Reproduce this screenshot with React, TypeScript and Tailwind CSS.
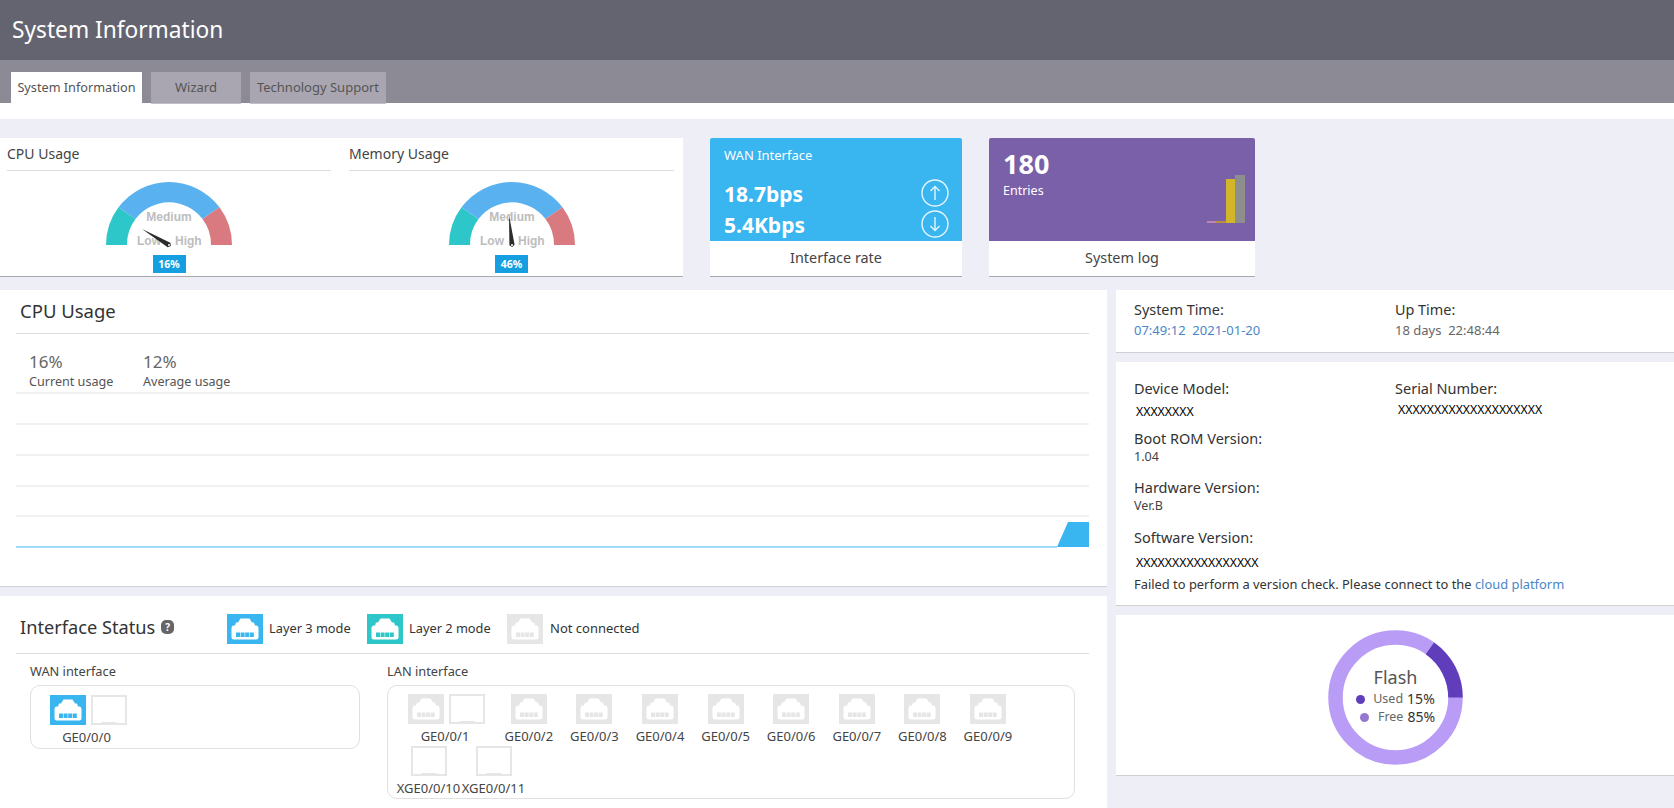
const LAN_PORTS = ["GE0/0/2", "GE0/0/3", "GE0/0/4", "GE0/0/5", "GE0/0/6", "GE0/0/7", "GE0/0/8", "GE0/0/9"];

const PortIcon = ({ color }: { color: string }) => (
  <svg width="36" height="30" viewBox="0 0 36 30" className="shrink-0 block">
    <rect width="36" height="30" fill={color} />
    <path
      d="M13.5 4.5h9l2.5 4h2l1 3h1.5q2 0 2 2.5v9q0 2.5-2.5 2.5h-22q-2.5 0-2.5-2.5v-9q0-2.5 2-2.5h1.5l1-3h2z"
      fill="#fff"
    />
    {[9, 13.6, 18.2, 22.8].map((x) => (
      <rect key={x} x={x} y="18.5" width="4" height="4.5" fill={color} />
    ))}
  </svg>
);

const SfpIcon = () => (
  <svg width="36" height="30" viewBox="0 0 36 30" className="shrink-0 block">
    <path d="M1 1h34v28H1z" fill="#fff" stroke="#e6e6e6" strokeWidth="2" />
    <path d="M9 29l2-2h14l2 2z" fill="#e6e6e6" />
  </svg>
);

const Gauge = ({ tipX, tipY, value }: { tipX: number; tipY: number; value: string }) => {
  const len = Math.hypot(tipX, tipY);
  const nx = (-tipY / len) * 2.6;
  const ny = (tipX / len) * 2.6;
  return (
    <div className="flex flex-col items-center">
      <svg width="140" height="75" viewBox="-70 -70 140 75" className="mt-[4px] block">
        <path d="M-63 0A63 63 0 0 1 -50.5 -37.7L-33.5 -26A42 42 0 0 0 -42 0z" fill="#2ec7c9" />
        <path d="M-50.5 -37.7A63 63 0 0 1 50.5 -37.7L33.5 -26A42 42 0 0 0 -33.5 -26z" fill="#5ab1ef" />
        <path d="M50.5 -37.7A63 63 0 0 1 63 0H42A42 42 0 0 0 33.5 -26z" fill="#d87a80" />
        <g fontFamily="Liberation Sans, sans-serif" fontSize="12" fontWeight="700" fill="#bdbdbd">
          <text x="0" y="-24" textAnchor="middle">Medium</text>
          <text x="-32" y="0" textAnchor="start">Low</text>
          <text x="6" y="0" textAnchor="start">High</text>
        </g>
        <path
          d={`M${tipX} ${tipY}L${nx} ${ny}L${-tipX * 0.07} ${-tipY * 0.07}L${-nx} ${-ny}z`}
          fill="#2b2b2b"
        />
        <circle cx="0" cy="0" r="1" fill="#fff" />
      </svg>
      <div className="mt-[5px] w-[33px] h-[18px] bg-[#169fe0] text-white text-[10.5px] font-bold leading-[18px] text-center">
        {value}
      </div>
    </div>
  );
};

const GaugeCol = ({ title, children, className }: { title: string; children: React.ReactNode; className: string }) => (
  <div className={className}>
    <div className="h-[33px] border-b border-[#dddddd] text-[14px] leading-[32px] text-[#444444]">{title}</div>
    {children}
  </div>
);

const PortItem = ({ label, icon, width, labelClass = "" }: { label: string; icon: React.ReactNode; width: string; labelClass?: string }) => (
  <div className={`flex flex-col items-center shrink-0 ${width}`}>
    <div className="flex gap-[5px]">{icon}</div>
    <div className={`mt-[3px] text-[13px] leading-[18px] whitespace-nowrap text-[#444444] ${labelClass}`}>{label}</div>
  </div>
);

const Chart = () => (
  <svg width="1073" height="160" viewBox="0 0 1073 160" className="block">
    {[1, 32, 63, 94, 124].map((y) => (
      <line key={y} x1="0" x2="1073" y1={y} y2={y} stroke="#ececec" strokeWidth="1.5" />
    ))}
    <path d="M1041 155L1052 130H1073V155z" fill="#39b5f0" />
    <line x1="0" x2="1041" y1="155" y2="155" stroke="#9fdcf5" strokeWidth="2" />
  </svg>
);

export default function App() {
  return (
    <div className="h-[808px] overflow-hidden bg-[#eeeef7] font-['Noto_Sans',sans-serif] text-[#333333]">
      <div className="h-[60px] bg-[#636470] pl-[12px] text-[22.7px] leading-[60px] text-white">System Information</div>
      <div className="h-[43px] bg-[#8c8a94] pl-[11px] pt-[12px] flex gap-[9px]">
        <div className="w-[131px] h-[31px] bg-white text-center text-[12.7px] leading-[31px] text-[#555555]">System Information</div>
        <div className="w-[90px] h-[32px] bg-[#a9a6b1] border-b border-[#c0bec6] text-center text-[13px] leading-[31px] text-[#555555]">Wizard</div>
        <div className="w-[136px] h-[32px] bg-[#a9a6b1] border-b border-[#c0bec6] text-center text-[13px] leading-[31px] text-[#555555]">Technology Support</div>
      </div>
      <div className="h-[16px] bg-white" />

      {/* top cards */}
      <div className="mt-[19px] flex h-[139px]">
        <div className="w-[683px] bg-white border-b border-[#a9a9b0] pl-[7px] flex gap-[18px]">
          <GaugeCol title="CPU Usage" className="w-[324px]">
            <Gauge tipX={-27} tipY={-16} value="16%" />
          </GaugeCol>
          <GaugeCol title="Memory Usage" className="w-[325px]">
            <Gauge tipX={-3} tipY={-30} value="46%" />
          </GaugeCol>
        </div>
        <div className="ml-[27px] w-[252px] bg-white border-b border-[#a9a9b0] rounded-t-[2px] flex flex-col">
          <div className="h-[103px] bg-[#39b5f0] rounded-t-[2px] pl-[14px] pr-[13px] pt-[7px] text-white">
            <div className="text-[13px] leading-[20px]">WAN Interface</div>
            <div className="mt-[14px] flex items-center justify-between h-[31px]">
              <span className="text-[21px] font-bold">18.7bps</span>
              <svg width="28" height="28" viewBox="0 0 28 28" fill="none" stroke="#e4f5fd" strokeWidth="1.4" className="-mt-[4px]">
                <circle cx="14" cy="14" r="13" />
                <path d="M14 21V7.5M9.5 12L14 7.5L18.5 12" />
              </svg>
            </div>
            <div className="flex items-center justify-between h-[31px]">
              <span className="text-[21px] font-bold">5.4Kbps</span>
              <svg width="28" height="28" viewBox="0 0 28 28" fill="none" stroke="#e4f5fd" strokeWidth="1.4" className="-mt-[4px]">
                <circle cx="14" cy="14" r="13" />
                <path d="M14 7V20.5M9.5 16L14 20.5L18.5 16" />
              </svg>
            </div>
          </div>
          <div className="text-center text-[14.4px] leading-[33px] text-[#444444]">Interface rate</div>
        </div>
        <div className="ml-[27px] w-[266px] bg-white border-b border-[#a9a9b0] rounded-t-[2px] flex flex-col">
          <div className="h-[103px] bg-[#7a60a8] rounded-t-[2px] pl-[14px] pr-[9px] text-white flex justify-between">
            <div className="pt-[9px]">
              <div className="text-[27px] font-bold leading-[34px]">180</div>
              <div className="mt-[1px] text-[12.5px] leading-[18px]">Entries</div>
            </div>
            <svg width="40" height="48" viewBox="0 0 40 48" className="mt-[37px]">
              <rect x="1" y="46" width="9" height="2" fill="#bf86b0" />
              <rect x="10" y="46" width="10" height="2" fill="#b8913c" />
              <rect x="20" y="4" width="9" height="44" fill="#d1b52a" />
              <rect x="29" y="0" width="10" height="48" fill="#8e8e8e" />
            </svg>
          </div>
          <div className="text-center text-[14.4px] leading-[33px] text-[#444444]">System log</div>
        </div>
      </div>

      <div className="mt-[13px] flex gap-[9px]">
        {/* left column */}
        <div className="w-[1107px] flex flex-col gap-[9px]">
          <div className="h-[297px] bg-white border-b border-[#cfcfd4] pl-[16px] pr-[18px]">
            <div className="h-[44px] border-b border-[#dddddd] pl-[4px] text-[18.5px] leading-[42px] text-[#333333]">CPU Usage</div>
            <div className="pl-[13px] pt-[16px] flex h-[58px]">
              <div className="w-[114px]">
                <div className="text-[17px] leading-[24px] text-[#666666]">16%</div>
                <div className="text-[12.6px] leading-[16px] text-[#555555]">Current usage</div>
              </div>
              <div>
                <div className="text-[17px] leading-[24px] text-[#666666]">12%</div>
                <div className="text-[12.6px] leading-[16px] text-[#555555]">Average usage</div>
              </div>
            </div>
            <Chart />
          </div>

          <div className="h-[212px] bg-white pl-[16px] pr-[18px]">
            <div className="h-[58px] border-b border-[#dddddd] flex items-end pb-[9px]">
              <div className="w-[211px] pl-[4px] mb-[5px] flex items-center gap-[6px]">
                <span className="text-[18.2px] leading-[24px]">Interface Status</span>
                <span className="w-[13px] h-[14px] rounded-[5px] bg-[#666666] text-white text-[10px] font-bold leading-[14px] text-center">?</span>
              </div>
              <div className="w-[140px] flex items-center gap-[6px]">
                <PortIcon color="#39b5f0" />
                <span className="text-[12.8px]">Layer 3 mode</span>
              </div>
              <div className="w-[140px] flex items-center gap-[6px]">
                <PortIcon color="#2ec7c9" />
                <span className="text-[12.8px]">Layer 2 mode</span>
              </div>
              <div className="flex items-center gap-[7px]">
                <PortIcon color="#e6e6e6" />
                <span className="text-[13px]">Not connected</span>
              </div>
            </div>

            <div className="pl-[14px] pt-[8px] flex gap-[27px]">
              <div className="w-[330px]">
                <div className="text-[12.8px] leading-[18px] text-[#444444]">WAN interface</div>
                <div className="mt-[5px] h-[64px] rounded-[10px] border border-[#e0e0e0] pl-[19px] pt-[9px]">
                  <PortItem
                    width="w-[77px]"
                    label="GE0/0/0"
                    labelClass="mr-[4px]"
                    icon={<><PortIcon color="#39b5f0" /><SfpIcon /></>}
                  />
                </div>
              </div>
              <div className="w-[688px]">
                <div className="text-[12.8px] leading-[18px] text-[#444444]">LAN interface</div>
                <div className="mt-[5px] h-[114px] rounded-[10px] border border-[#e0e0e0] pl-[8px] pt-[8px]">
                  <div className="flex">
                    <PortItem
                      width="w-[100px]"
                      label="GE0/0/1"
                      labelClass="mr-[2px]"
                      icon={<><PortIcon color="#e6e6e6" /><SfpIcon /></>}
                    />
                    {LAN_PORTS.map((name) => (
                      <PortItem key={name} width="w-[65.6px]" label={name} icon={<PortIcon color="#e6e6e6" />} />
                    ))}
                  </div>
                  <div className="flex mt-[1px]">
                    <PortItem width="w-[65px]" label="XGE0/0/10" icon={<SfpIcon />} />
                    <PortItem width="w-[65px]" label="XGE0/0/11" icon={<SfpIcon />} />
                  </div>
                </div>
              </div>
            </div>
          </div>
        </div>

        {/* right column */}
        <div className="w-[558px] flex flex-col gap-[9px]">
          <div className="h-[63px] bg-white border-b border-[#cfcfd4] pl-[18px] pt-[10px] flex">
            <div className="w-[261px]">
              <div className="text-[14.4px] leading-[20px]">System Time:</div>
              <div className="text-[13px] leading-[20px] text-[#4a86c8]">07:49:12&nbsp;&nbsp;2021-01-20</div>
            </div>
            <div>
              <div className="text-[14.4px] leading-[20px]">Up Time:</div>
              <div className="text-[13px] leading-[20px] text-[#666666]">18 days&nbsp;&nbsp;22:48:44</div>
            </div>
          </div>

          <div className="h-[244px] bg-white border-b border-[#cfcfd4] pl-[18px] pt-[16px] flex">
            <div className="w-[261px] shrink-0">
              <div className="text-[14.5px] leading-[20px]">Device Model:</div>
              <div className="mt-[4px] pl-[2px] text-[12.3px] leading-[20px] text-black">XXXXXXXX</div>
              <div className="mt-[6px] text-[14.5px] leading-[20px]">Boot ROM Version:</div>
              <div className="mt-[1px] text-[12.5px] leading-[16px] text-[#444444]">1.04</div>
              <div className="mt-[12px] text-[14.5px] leading-[20px]">Hardware Version:</div>
              <div className="mt-[1px] text-[12.5px] leading-[16px] text-[#444444]">Ver.B</div>
              <div className="mt-[13px] text-[14.5px] leading-[20px]">Software Version:</div>
              <div className="mt-[6px] pl-[2px] text-[12.3px] leading-[20px] text-black">XXXXXXXXXXXXXXXXX</div>
              <div className="mt-[1px] text-[12.9px] leading-[20px] whitespace-nowrap">
                Failed to perform a version check. Please connect to the <span className="text-[#4a86c8]">cloud platform</span>
              </div>
            </div>
            <div>
              <div className="text-[14.5px] leading-[20px]">Serial Number:</div>
              <div className="mt-[2px] pl-[3px] text-[12.3px] leading-[20px] text-black">XXXXXXXXXXXXXXXXXXXX</div>
            </div>
          </div>

          <div className="h-[161px] bg-white border-b border-[#cfcfd4] pt-[5px] flex items-center justify-center">
            <div className="relative w-[135px] h-[135px] ml-[1px]">
              <svg width="135" height="135" viewBox="-67.5 -67.5 135 135" className="block">
                <circle r="60" fill="none" stroke="#b89cf5" strokeWidth="14.5" />
                <path d="M34.4 -49.1A60 60 0 0 1 60 0" fill="none" stroke="#5f3dbb" strokeWidth="14.5" />
              </svg>
              <div className="absolute inset-0 flex flex-col items-center pt-[34px]">
                <div className="text-[18px] leading-[26px] text-[#555555]">Flash</div>
                <div className="flex items-center text-[12.5px] leading-[18px] text-[#666666]">
                  <span className="w-[9px] h-[9px] rounded-full bg-[#5f3dbb] mr-[8px]" />
                  Used <span className="ml-[4px] text-[14px] text-[#333333]">15%</span>
                </div>
                <div className="flex items-center text-[12.5px] leading-[18px] text-[#666666] ml-[4px]">
                  <span className="w-[9px] h-[9px] rounded-full bg-[#9478d0] mr-[9px]" />
                  Free <span className="ml-[4px] text-[14px] text-[#333333]">85%</span>
                </div>
              </div>
            </div>
          </div>
        </div>
      </div>
    </div>
  );
}
